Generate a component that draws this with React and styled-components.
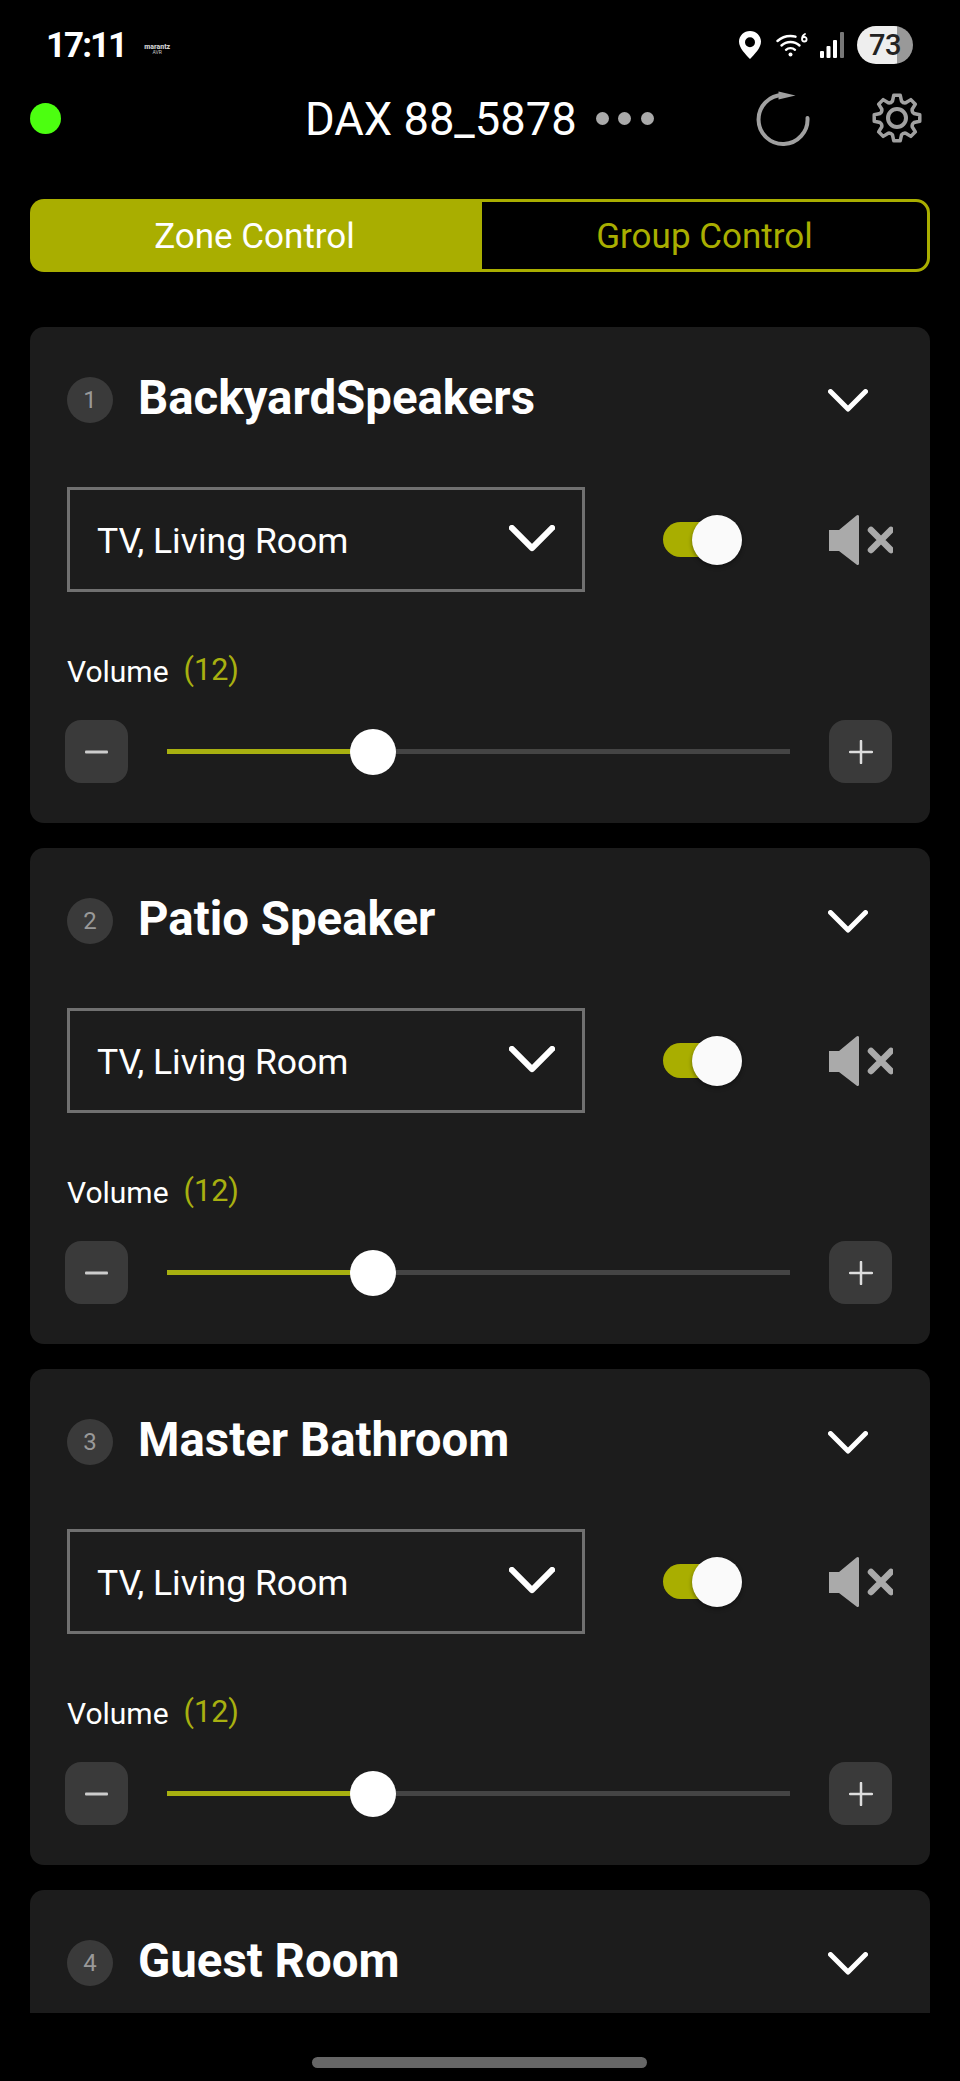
import React from "react";
import styled, { createGlobalStyle } from "styled-components";

const LIME = "#a9ae00";

const Global = createGlobalStyle`
  html, body { margin: 0; padding: 0; background: #000; }
  * { box-sizing: border-box; }
  body { font-family: Roboto, "Liberation Sans", sans-serif; color: #fff; }
`;

const Screen = styled.div`
  width: 960px;
  height: 2081px;
  background: #000;
  display: flex;
  flex-direction: column;
  overflow: hidden;
`;

const StatusBar = styled.div`
  height: 84px;
  padding: 6px 47px 0;
  display: flex;
  align-items: center;
  flex-shrink: 0;
`;

const Clock = styled.span`
  margin-left: -1px;
  font-size: 35px;
  font-weight: 700;
  line-height: 1;
  letter-spacing: -2px;
`;

const Brand = styled.span`
  margin: 9px 0 0 18px;
  display: flex;
  flex-direction: column;
  align-items: center;
  font-weight: 900;
  line-height: 5px;
  color: #ccc;
`;

const BrandName = styled.span`
  font-size: 7px;
`;

const BrandModel = styled.span`
  font-size: 5px;
  font-weight: 400;
`;

const StatusIcons = styled.div`
  margin-left: auto;
  display: flex;
  align-items: center;
`;

const WifiSlot = styled.span`
  margin: 0 11px 0 15px;
  display: flex;
`;

const Battery = styled.div`
  width: 56px;
  height: 38px;
  margin-left: 12px;
  border-radius: 19px;
  background: linear-gradient(90deg, #eee 0 40px, #999 40px);
  color: #222;
  font-size: 29px;
  font-weight: 500;
  display: flex;
  align-items: center;
  justify-content: center;
  letter-spacing: -0.5px;
`;

const Header = styled.div`
  height: 68px;
  padding: 0 30px;
  display: flex;
  align-items: center;
  flex-shrink: 0;
`;

const Led = styled.span`
  width: 31px;
  height: 31px;
  border-radius: 50%;
  background: #4cff10;
`;

const DeviceName = styled.span`
  margin: 3px 0 0 244px;
  font-size: 45.3px;
  line-height: 1;
`;

const Dots = styled.span`
  margin-left: 19px;
  display: flex;
  gap: 9.5px;
`;

const Dot = styled.span`
  width: 13px;
  height: 13px;
  border-radius: 50%;
  background: #aaa;
`;

const HeaderActions = styled.div`
  margin-left: auto;
  margin-right: 3px;
  display: flex;
  align-items: center;
  gap: 54.5px;
`;

const Tabs = styled.div`
  margin: 47px 30px 0;
  height: 73px;
  display: flex;
  flex-shrink: 0;
`;

const Tab = styled.div`
  flex: ${(p) => (p.$active ? "0 0 449px" : "1")};
  padding-top: 2px;
  display: flex;
  align-items: center;
  justify-content: center;
  font-size: 35px;
  color: ${(p) => (p.$active ? "#fff" : LIME)};
  background: ${(p) => (p.$active ? LIME : "#000")};
  border: ${(p) => (p.$active ? "none" : `3px solid ${LIME}`)};
  border-radius: ${(p) => (p.$active ? "14px 0 0 14px" : "0 14px 14px 0")};
`;

const List = styled.div`
  margin: 55px 30px 0;
  height: 1686px;
  overflow: hidden;
  display: flex;
  flex-direction: column;
  gap: 25px;
  flex-shrink: 0;
`;

const Card = styled.section`
  flex-shrink: 0;
  height: 496px;
  padding: 50px 38px 40px 37px;
  background: #1c1c1c;
  border-radius: 14px;
  display: flex;
  flex-direction: column;
`;

const CardHead = styled.div`
  height: 46px;
  display: flex;
  align-items: center;
`;

const Badge = styled.span`
  width: 46px;
  height: 46px;
  border-radius: 50%;
  background: #3a3a3a;
  color: #999;
  font-size: 24px;
  display: flex;
  align-items: center;
  justify-content: center;
`;

const ZoneName = styled.h2`
  margin: -2px 0 0 25px;
  font-size: 47.4px;
  font-weight: 700;
  line-height: 1;
`;

const HeadChevron = styled.span`
  margin: 2px 24px 0 auto;
  display: flex;
`;

const SourceRow = styled.div`
  margin-top: 64px;
  height: 105px;
  display: flex;
  align-items: center;
`;

const SourceSelect = styled.div`
  width: 518px;
  height: 105px;
  border: 3px solid #707070;
  padding: 2px 27px 0;
  display: flex;
  align-items: center;
  justify-content: space-between;
  font-size: 35.5px;
`;

const SelectChevron = styled.span`
  margin-top: -4px;
  display: flex;
`;

const Toggle = styled.div`
  margin-left: 78px;
  width: 79px;
  height: 50px;
  position: relative;
  display: flex;
  align-items: center;
`;

const ToggleTrack = styled.span`
  width: 60px;
  height: 35px;
  border-radius: 18px;
  background: ${LIME};
`;

const ToggleKnob = styled.span`
  position: absolute;
  right: 0;
  top: 0;
  width: 50px;
  height: 50px;
  border-radius: 50%;
  background: #fafafa;
  box-shadow: 0 2px 4px rgba(0, 0, 0, 0.4);
`;

const MuteButton = styled.span`
  margin: 0 -1px 0 auto;
  display: flex;
`;

const VolumeLabel = styled.div`
  margin-top: 59px;
  height: 40px;
  display: flex;
  align-items: center;
  font-size: 30px;
`;

const VolumeValue = styled.span`
  margin-left: 15px;
  margin-top: -3px;
  font-size: 30.5px;
  color: #a8b010;
`;

const SliderRow = styled.div`
  margin: auto 0 0 -2px;
  height: 63px;
  display: flex;
  align-items: center;
`;

const StepButton = styled.span`
  width: 63px;
  height: 63px;
  border-radius: 16px;
  background: #3a3a3a;
  display: flex;
  align-items: center;
  justify-content: center;
  flex-shrink: 0;
`;

const Track = styled.div`
  margin: 0 39px;
  flex: 1;
  height: 5px;
  background: #444;
  position: relative;
`;

const TrackFill = styled.div`
  height: 100%;
  background: #a8b010;
`;

const Thumb = styled.span`
  position: absolute;
  top: 50%;
  width: 46px;
  height: 46px;
  border-radius: 50%;
  background: #fff;
  transform: translate(-50%, -50%);
`;

const HomeBarWrap = styled.div`
  flex: 1;
  display: flex;
  justify-content: center;
  padding: 44px 2px 0 0;
`;

const HomeBar = styled.span`
  width: 335px;
  height: 11px;
  border-radius: 6px;
  background: #666;
`;

const Chevron = ({ w = 40, sw = 5 }) => (
  <svg width={w} height={w * 0.58} viewBox="0 0 40 23" fill="none" stroke="#fff" strokeWidth={(sw * 40) / w} strokeLinecap="round" strokeLinejoin="round">
    <path d="M2.5 2.5 20 20 37.5 2.5" />
  </svg>
);

const PinIcon = () => (
  <svg width="22" height="28" viewBox="0 0 22 28">
    <path fillRule="evenodd" fill="#fff" d="M11 0C5 0 0 4.700 0 10.600 0 17 6.500 23.500 11 28c4.500-4.500 11-11 11-17.400C22 4.700 17 0 11 0Zm0 6.200a5 5 0 1 1 0 10 5 5 0 0 1 0-10Z" />
  </svg>
);

const WifiIcon = () => (
  <svg width="33" height="24" viewBox="0 0 33 24" fill="none" stroke="#fff" strokeLinecap="round">
    <path strokeWidth="2.400" d="M1.500 8C5 4.800 9.500 3 14.500 3c1.700 0 3.400.2 5 .7" />
    <path strokeWidth="2.400" d="M5.500 12.500c2.400-2.200 5.600-3.500 9-3.500s6.600 1.300 9 3.500" />
    <path strokeWidth="2.400" d="M10 16.800c1.200-1.100 2.800-1.700 4.500-1.700s3.300.6 4.500 1.700" />
    <circle cx="14.500" cy="21.500" r="2" fill="#fff" stroke="none" />
    <path strokeWidth="1.800" d="M29 1c-2 1-3 3-3 5 0 1.500 1 2.500 2.300 2.500s2.300-1 2.300-2.300-1-2.200-2.300-2.200-2.300 1-2.300 2" />
  </svg>
);

const SignalIcon = () => (
  <svg width="25" height="26" viewBox="0 0 25 26">
    <rect x="0" y="19" width="4" height="7" rx="1" fill="#fff" />
    <rect x="6.500" y="14" width="4" height="12" rx="1" fill="#fff" />
    <rect x="13" y="8" width="4" height="18" rx="1" fill="#fff" />
    <rect x="20" y="0" width="4" height="26" rx="1" fill="#777" />
  </svg>
);

const RefreshIcon = () => (
  <svg width="60" height="60" viewBox="0 0 60 60" fill="none">
    <path d="M54.500 30A24.500 24.500 0 1 1 30 7" stroke="#a0a0a0" strokeWidth="4" strokeLinecap="round" />
    <path d="M25.500 3.500 42.500 7.500 25.500 11.500Z" fill="#a0a0a0" />
  </svg>
);

// Eight-toothed gear outline, built around the centre of a 60x60 box.
const gearPath = (() => {
  const polar = (r, deg) => {
    const t = (deg * Math.PI) / 180;
    return `${(30 + r * Math.cos(t)).toFixed(2)} ${(30 + r * Math.sin(t)).toFixed(2)}`;
  };
  let d = "";
  for (let i = 0; i < 8; i++) {
    const a = i * 45 - 90;
    d += `${i === 0 ? "M" : "L"}${polar(17.5, a - 15)} `;
    d += `L${polar(23, a - 8)} L${polar(23, a + 8)} L${polar(17.5, a + 15)} `;
    d += `Q${polar(16, a + 22.5)} ${polar(17.5, a + 30)} `;
  }
  return `${d}Z`;
})();

const GearIcon = () => (
  <svg width="60" height="60" viewBox="0 0 60 60" fill="none" stroke="#a0a0a0" strokeWidth="3.500" strokeLinejoin="round">
    <path d={gearPath} />
    <circle cx="30" cy="30" r="9" strokeWidth="4" />
  </svg>
);

const MuteIcon = () => (
  <svg width="64" height="52" viewBox="0 0 64 52" fill="#aaa">
    <path d="M0 16h10L27.500 1.500c1.200-1 2.500-.5 2.500 1v47c0 1.500-1.300 2-2.500 1L10 37H0Z" />
    <path d="M42 16 62 36M62 16 42 36" stroke="#aaa" strokeWidth="6.500" strokeLinecap="round" fill="none" />
  </svg>
);

const MinusIcon = () => (
  <svg width="24" height="6" viewBox="0 0 24 6">
    <rect y="1.500" width="23" height="3" rx="1" fill="#ccc" />
  </svg>
);

const PlusIcon = () => (
  <svg width="24" height="24" viewBox="0 0 24 24">
    <path d="M12 1v22M1 12h22" stroke="#ddd" strokeWidth="2.500" strokeLinecap="round" />
  </svg>
);

const zones = [
  { id: 1, name: "BackyardSpeakers" },
  { id: 2, name: "Patio Speaker" },
  { id: 3, name: "Master Bathroom" },
  { id: 4, name: "Guest Room", headerOnly: true },
];

const ZoneCard = ({ zone }) => (
  <Card>
    <CardHead>
      <Badge>{zone.id}</Badge>
      <ZoneName>{zone.name}</ZoneName>
      <HeadChevron>
        <Chevron />
      </HeadChevron>
    </CardHead>
    {!zone.headerOnly && (
      <>
        <SourceRow>
          <SourceSelect>
            TV, Living Room
            <SelectChevron>
              <Chevron w={46} sw={6} />
            </SelectChevron>
          </SourceSelect>
          <Toggle>
            <ToggleTrack />
            <ToggleKnob />
          </Toggle>
          <MuteButton>
            <MuteIcon />
          </MuteButton>
        </SourceRow>
        <VolumeLabel>
          Volume
          <VolumeValue>(12)</VolumeValue>
        </VolumeLabel>
        <SliderRow>
          <StepButton>
            <MinusIcon />
          </StepButton>
          <Track>
            <TrackFill style={{ width: "33%" }} />
            <Thumb style={{ left: "33%" }} />
          </Track>
          <StepButton>
            <PlusIcon />
          </StepButton>
        </SliderRow>
      </>
    )}
  </Card>
);

export default function App() {
  return (
    <Screen>
      <Global />
      <StatusBar>
        <Clock>17:11</Clock>
        <Brand>
          <BrandName>marantz</BrandName>
          <BrandModel>AVR</BrandModel>
        </Brand>
        <StatusIcons>
          <PinIcon />
          <WifiSlot>
            <WifiIcon />
          </WifiSlot>
          <SignalIcon />
          <Battery>73</Battery>
        </StatusIcons>
      </StatusBar>
      <Header>
        <Led />
        <DeviceName>DAX 88_5878</DeviceName>
        <Dots>
          <Dot />
          <Dot />
          <Dot />
        </Dots>
        <HeaderActions>
          <RefreshIcon />
          <GearIcon />
        </HeaderActions>
      </Header>
      <Tabs>
        <Tab $active>Zone Control</Tab>
        <Tab>Group Control</Tab>
      </Tabs>
      <List>
        {zones.map((z) => (
          <ZoneCard key={z.id} zone={z} />
        ))}
      </List>
      <HomeBarWrap>
        <HomeBar />
      </HomeBarWrap>
    </Screen>
  );
}
